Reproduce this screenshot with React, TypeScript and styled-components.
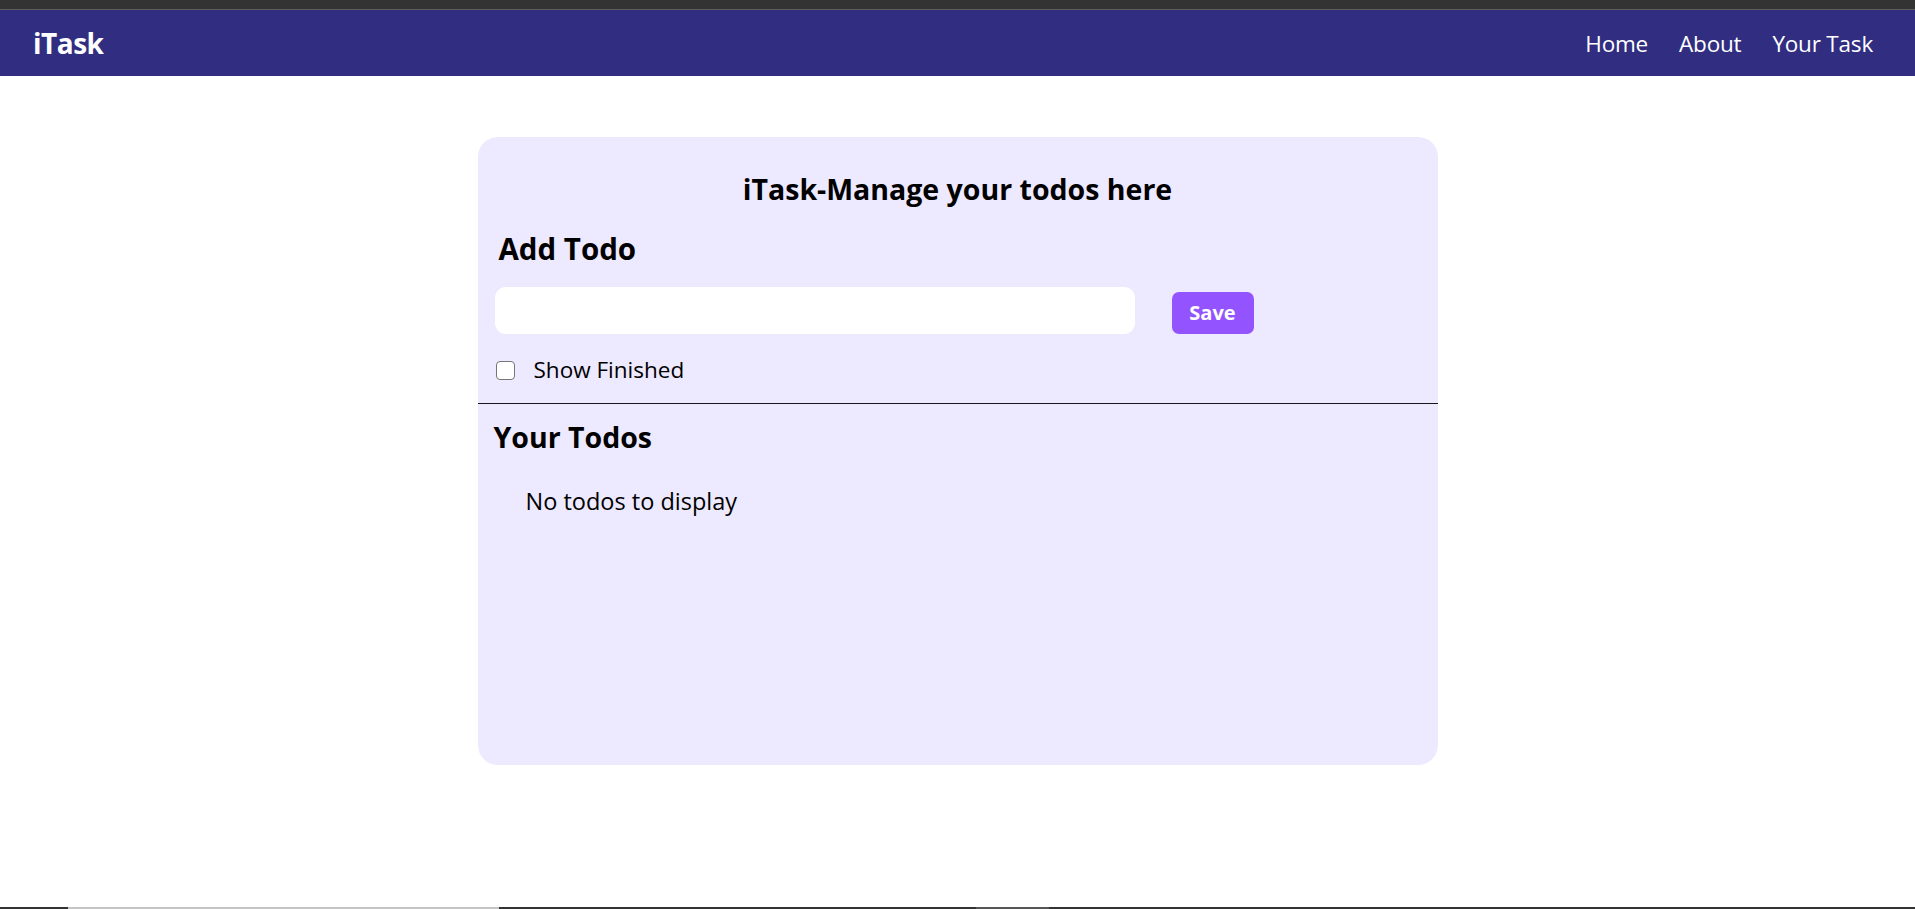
import { useState } from 'react';
import styled, { createGlobalStyle } from 'styled-components';

const GlobalStyle = createGlobalStyle`
	html, body {
		margin: 0;
		padding: 0;
	}
	body {
		font-family: 'Segoe UI', 'Open Sans', 'Noto Sans', sans-serif;
		background: #ffffff;
		color: #000000;
	}
	* {
		box-sizing: border-box;
	}
`;

const Page = styled.div`
	display: flex;
	flex-direction: column;
	min-height: 909px;
`;

const ChromeBar = styled.div`
	height: 10px;
	background: #333333;
	border-bottom: 1px solid #5c5c5c;
`;

const Nav = styled.nav`
	display: flex;
	align-items: center;
	justify-content: space-between;
	height: 66px;
	padding: 0 42px 0 33px;
	background: #312e81;
	color: #ffffff;
`;

const Logo = styled.span`
	font-size: 28px;
	font-weight: 700;
	letter-spacing: -0.5px;
`;

const NavList = styled.ul`
	display: flex;
	gap: 31px;
	margin: 0;
	padding: 0;
	list-style: none;
`;

const NavItem = styled.li`
	font-size: 22.5px;
	letter-spacing: -0.2px;
	cursor: pointer;
	&:hover {
		font-weight: 700;
	}
`;

const Main = styled.main`
	flex: 1;
	padding-top: 61px;
`;

const Card = styled.section`
	width: 960px;
	min-height: 628px;
	margin: 0 auto;
	background: #ede9fe;
	border-radius: 20px;
	overflow: hidden;
`;

const Title = styled.h1`
	margin: 32px 0 0;
	font-size: 28.5px;
	line-height: 40px;
	font-weight: 700;
	text-align: center;
`;

const SectionTitle = styled.h2<{ $indent: number; $gap: number; $size: number }>`
	margin: ${(props) => props.$gap}px 0 0;
	padding-left: ${(props) => props.$indent}px;
	font-size: ${(props) => props.$size}px;
	line-height: 36px;
	font-weight: 700;
`;

const FormRow = styled.div`
	display: flex;
	align-items: center;
	gap: 37px;
	margin-top: 20px;
	padding-left: 17px;
`;

const TextInput = styled.input`
	width: 640px;
	height: 47px;
	padding: 0 14px;
	border: none;
	border-radius: 11px;
	background: #ffffff;
	font: inherit;
	font-size: 20px;
	outline: none;
`;

const SaveButton = styled.button`
	width: 82px;
	height: 42px;
	margin-top: 4px;
	border: none;
	border-radius: 7px;
	background: #9353ff;
	color: #ffffff;
	font-family: inherit;
	font-size: 20px;
	font-weight: 700;
	cursor: pointer;
	&:hover {
		background: #7c3aed;
	}
`;

const CheckRow = styled.label`
	display: flex;
	align-items: center;
	gap: 19px;
	margin-top: 21px;
	padding-left: 18px;
	font-size: 22.5px;
	line-height: 30px;
	cursor: pointer;
`;

const CheckBox = styled.input`
	appearance: none;
	width: 19px;
	height: 19px;
	margin: 0;
	border: 1.5px solid #767676;
	border-radius: 4px;
	background: #ffffff;
	&:checked {
		background: #2563eb;
		border-color: #2563eb;
	}
`;

const Divider = styled.hr`
	margin: 18px 0 0;
	border: none;
	border-top: 1.5px solid #000000;
	opacity: 0.9;
`;

const EmptyText = styled.div`
	margin-top: 31px;
	padding-left: 48px;
	font-size: 23.5px;
	line-height: 30px;
`;

const BottomBar = styled.div`
	display: grid;
	grid-template-columns: 68px 431px 477px 73px 1fr;
	height: 2px;
	background: #333333;
`;

const BarSegment = styled.div<{ $tone: string }>`
	background: ${(props) => props.$tone};
`;

const links: string[] = ['Home', 'About', 'Your Task'];

const App = () => {
	const [todo, setTodo] = useState('');
	const [showFinished, setShowFinished] = useState(false);

	return (
		<Page>
			<GlobalStyle />
			<ChromeBar />
			<Nav>
				<Logo>iTask</Logo>
				<NavList>
					{links.map((link) => (
						<NavItem key={link}>{link}</NavItem>
					))}
				</NavList>
			</Nav>
			<Main>
				<Card>
					<Title>iTask-Manage your todos here</Title>
					<SectionTitle $indent={21} $gap={22} $size={29.5}>
						Add Todo
					</SectionTitle>
					<FormRow>
						<TextInput value={todo} onChange={(e) => setTodo(e.target.value)} />
						<SaveButton onClick={() => setTodo('')}>Save</SaveButton>
					</FormRow>
					<CheckRow>
						<CheckBox
							type="checkbox"
							checked={showFinished}
							onChange={() => setShowFinished(!showFinished)}
						/>
						Show Finished
					</CheckRow>
					<Divider />
					<SectionTitle $indent={16} $gap={15} $size={28.5}>
						Your Todos
					</SectionTitle>
					<EmptyText>No todos to display</EmptyText>
				</Card>
			</Main>
			<BottomBar>
				<BarSegment $tone="#333333" />
				<BarSegment $tone="#c4c4c4" />
				<BarSegment $tone="#333333" />
				<BarSegment $tone="#555555" />
				<BarSegment $tone="#333333" />
			</BottomBar>
		</Page>
	);
};

export default App;
